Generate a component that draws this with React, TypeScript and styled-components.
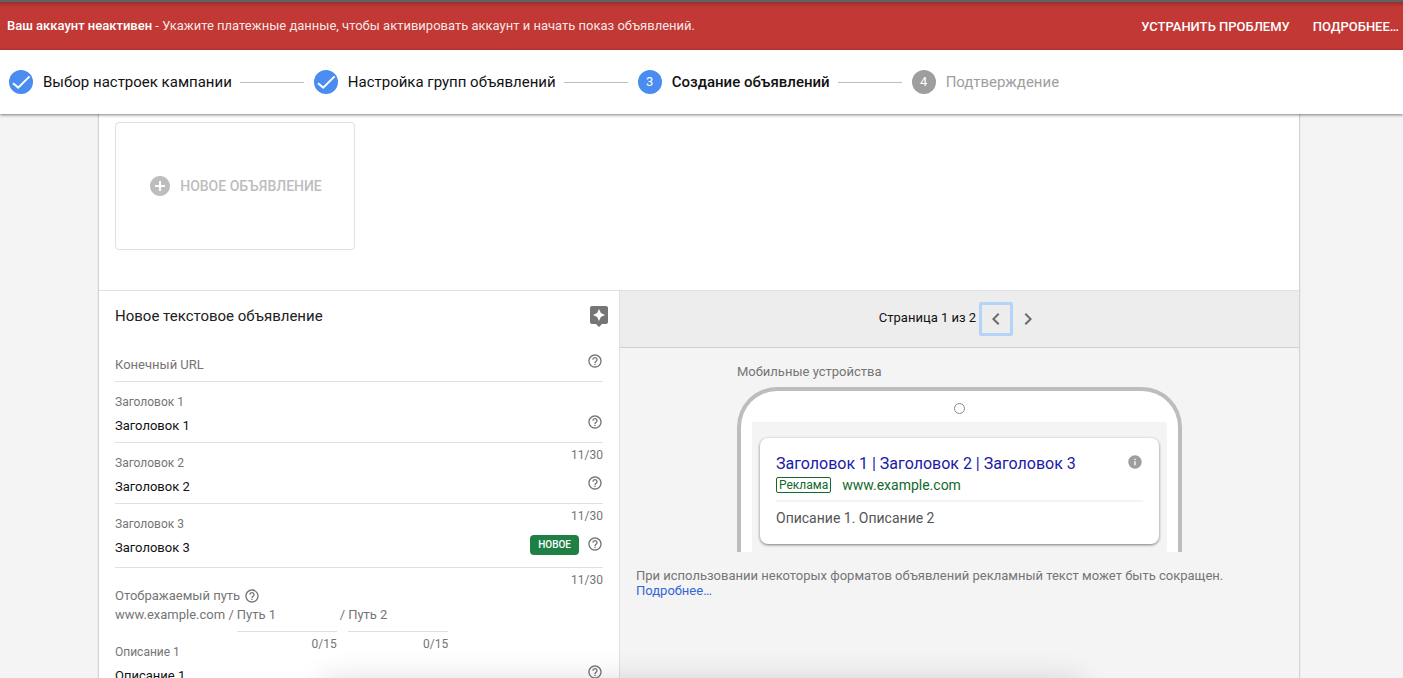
import React from "react";
import styled, { createGlobalStyle, css } from "styled-components";
import {
  MdAddCircle,
  MdAssistant,
  MdChevronLeft,
  MdChevronRight,
  MdHelpOutline,
  MdInfo,
} from "react-icons/md";

const GlobalStyle = createGlobalStyle`
  *, *::before, *::after { box-sizing: border-box; }
  body {
    margin: 0;
    background: #f4f4f4;
    font-family: Roboto, "Noto Sans", sans-serif;
    font-size: 13px;
    line-height: 16px;
    color: #212121;
  }
  button, input { font: inherit; color: inherit; }
`;

const Page = styled.div`
  display: flex;
  flex-direction: column;
  height: 100vh;
  overflow: hidden;
`;

/* Alert */

const Alert = styled.div`
  display: flex;
  align-items: center;
  justify-content: space-between;
  height: 50px;
  flex-shrink: 0;
  padding: 0 4px 0 7px;
  border-top: 2px solid #616161;
  background: linear-gradient(#92302d, #c13834 5px);
  color: #fff;
`;

const AlertText = styled.p`
  margin: 0;
  color: rgba(255, 255, 255, 0.9);

  b {
    font-weight: 500;
    color: #fff;
  }
`;

const AlertActions = styled.div`
  display: flex;
  gap: 23px;
  padding-top: 2px;
`;

const AlertButton = styled.button`
  padding: 0;
  border: 0;
  background: none;
  font-weight: 500;
  text-transform: uppercase;
  cursor: pointer;
`;

/* Stepper */

const Stepper = styled.ol`
  position: relative;
  z-index: 1;
  display: flex;
  align-items: center;
  gap: 8px;
  height: 64px;
  flex-shrink: 0;
  margin: 0;
  padding: 0 9px;
  list-style: none;
  background: #fff;
  box-shadow: 0 1px 3px rgba(0, 0, 0, 0.5);
`;

type StepState = "done" | "current" | "upcoming";

const Step = styled.li<{ $state: StepState }>`
  display: flex;
  align-items: center;
  gap: 10px;
  font-size: 15px;
  line-height: 20px;
  white-space: nowrap;
  font-weight: ${(p) => (p.$state === "current" ? 500 : 400)};
  color: ${(p) => (p.$state === "upcoming" ? "#9e9e9e" : "#111")};
`;

const StepMark = styled.span<{ $state: StepState }>`
  display: flex;
  align-items: center;
  justify-content: center;
  width: 24px;
  height: 24px;
  border-radius: 50%;
  background: ${(p) => (p.$state === "upcoming" ? "#9e9e9e" : "#4a8cf0")};
  color: #fff;
  font-size: 13px;
  font-weight: 400;
`;

const StepLine = styled.li`
  width: 64px;
  height: 1px;
  margin-right: 2px;
  background: #bdbdbd;
`;

/* Card */

const Main = styled.main`
  flex: 1;
  min-height: 0;
  padding: 0 104px 0 99px;
  overflow: hidden;
`;

const Card = styled.div`
  background: #fff;
  box-shadow: 0 0 2px rgba(0, 0, 0, 0.4);
`;

const AdList = styled.section`
  padding: 8px 16px 40px;
  border-bottom: 1px solid #e0e0e0;
`;

const NewAdButton = styled.button`
  display: flex;
  align-items: center;
  justify-content: center;
  gap: 8px;
  width: 240px;
  height: 128px;
  padding: 0;
  border: 1px solid #e0e0e0;
  border-radius: 4px;
  background: #fff;
  color: #bdbdbd;
  font-size: 14px;
  font-weight: 500;
  text-transform: uppercase;
  cursor: pointer;
`;

const Columns = styled.div`
  display: flex;
`;

const Editor = styled.form`
  width: 521px;
  flex-shrink: 0;
  padding: 0 16px 40px;
  border-right: 1px solid #e0e0e0;
`;

const EditorHeader = styled.header`
  display: flex;
  align-items: center;
  justify-content: space-between;
  height: 50px;
  margin: 0 -8px 9px 0;
  color: #757575;
`;

const EditorTitle = styled.h2`
  margin: 0;
  font-size: 15px;
  line-height: 20px;
  font-weight: 400;
  color: #212121;
`;

const IconButton = styled.button`
  display: flex;
  flex-shrink: 0;
  padding: 0;
  border: 0;
  background: none;
  color: #757575;
  cursor: pointer;
`;

/* Fields */

const FieldLabel = styled.label`
  display: block;
  margin-bottom: 1px;
  font-size: 12px;
  color: #757575;
`;

const FieldRow = styled.div`
  display: flex;
  align-items: flex-start;
  gap: 8px;
  min-height: 32px;
  border-bottom: 1px solid #e0e0e0;

  ${IconButton} {
    margin-top: 3px;
  }
`;

const inputReset = css`
  min-width: 0;
  padding: 0;
  border: 0;
  outline: 0;
  background: none;

  &::placeholder {
    color: #757575;
    opacity: 1;
  }
`;

const FieldInput = styled.input`
  ${inputReset}
  flex: 1;
  height: 28px;
  color: #111;
`;

const FieldFooter = styled.div`
  height: 12px;
  font-size: 12px;
  line-height: 24px;
  text-align: right;
  color: #757575;
`;

const NewBadge = styled.span`
  height: 20px;
  margin: 2px 0 12px;
  padding: 0 8px;
  border-radius: 4px;
  background: #1e8045;
  color: #fff;
  font-size: 10px;
  line-height: 20px;
  font-weight: 500;
`;

const PathLabel = styled.div`
  display: flex;
  align-items: center;
  gap: 4px;
  margin-top: 8px;
  color: #757575;
`;

const PathRow = styled.div`
  display: flex;
  gap: 3px;
  line-height: 22px;
  color: #757575;
`;

const PathField = styled.div`
  width: 100px;
`;

const PathInput = styled.input`
  ${inputReset}
  display: block;
  width: 100%;
  height: 28px;
  padding-bottom: 6px;
  border-bottom: 1px solid #e0e0e0;
`;

/* Preview */

const Preview = styled.section`
  flex: 1;
  min-width: 0;
  background: #f4f4f4;
`;

const Pager = styled.nav`
  display: flex;
  align-items: center;
  justify-content: center;
  height: 57px;
  padding-left: 4px;
  border-bottom: 1px solid #d0d0d0;
  background: #ededed;
  color: #111;
`;

const PagerText = styled.span`
  padding: 0 4px 2px 0;
`;

const PagerButton = styled.button<{ $active?: boolean }>`
  display: flex;
  align-items: center;
  justify-content: center;
  width: 32px;
  height: 32px;
  padding: 0;
  border: 0;
  border-radius: 1px;
  background: none;
  color: #6b6b6b;
  cursor: pointer;
  ${(p) => p.$active && "box-shadow: inset 0 0 0 2px #b3d4f7, 0 0 0 1px #b3d4f7;"}
`;

const Device = styled.figure`
  width: 445px;
  max-width: 100%;
  margin: 16px auto;
`;

const DeviceName = styled.figcaption`
  margin-bottom: 7px;
  color: #757575;
`;

const Phone = styled.div`
  display: flex;
  flex-direction: column;
  align-items: center;
  padding: 0 11px;
  border: 4px solid #bdbdbd;
  border-bottom: 0;
  border-radius: 40px 40px 0 0;
  background: #fff;
`;

const Camera = styled.span`
  width: 11px;
  height: 11px;
  margin: 12px 0 8px;
  border: 1px solid #8a8a8a;
  border-radius: 50%;
`;

const Screen = styled.div`
  align-self: stretch;
  padding: 16px 8px 8px;
  background: #f4f4f4;
`;

const AdCard = styled.article`
  height: 106px;
  padding: 16px;
  border-radius: 8px;
  background: #fff;
  box-shadow: 0 1px 3px rgba(0, 0, 0, 0.5);
`;

const AdHeading = styled.div`
  display: flex;
  justify-content: space-between;
  color: #9e9e9e;
`;

const AdTitle = styled.h3`
  margin: 0;
  font-size: 16px;
  line-height: 20px;
  font-weight: 400;
  color: #1a1aa8;
`;

const AdUrl = styled.div`
  display: flex;
  align-items: center;
  gap: 11px;
  height: 21px;
  font-size: 14px;
  color: #11692b;
`;

const AdTag = styled.span`
  padding: 0 2px;
  border: 1px solid #11692b;
  border-radius: 2px;
  font-size: 12px;
  line-height: 14px;
`;

const AdText = styled.p`
  margin: 5px 0 0;
  padding-top: 8px;
  border-top: 2px solid #f4f4f4;
  font-size: 14px;
  color: #545454;
`;

const Note = styled.p`
  margin: 0 16px;
  line-height: 15px;
  color: #757575;

  a {
    display: block;
    width: max-content;
    color: #3367d6;
    text-decoration: none;
  }
`;

/* Shadow cast by the sheet docked below the window's edge */
const SheetShadow = styled.div`
  position: fixed;
  z-index: 2;
  top: 100%;
  left: 23%;
  right: 23%;
  height: 40px;
  border-radius: 8px;
  box-shadow: 0 8px 32px 4px rgba(0, 0, 0, 0.16);
  pointer-events: none;
`;

const CheckMark = () => (
  <svg width="24" height="24" viewBox="0 0 24 24" fill="none" aria-hidden="true">
    <path d="M4 13.2 9.2 17.6 20.6 6.4" stroke="#fff" strokeWidth="2" />
  </svg>
);

const Help = () => (
  <IconButton type="button" aria-label="Справка">
    <MdHelpOutline size={16} />
  </IconButton>
);

interface FieldProps {
  id: string;
  label: string;
  value?: string;
  count?: string;
  isNew?: boolean;
}

const Field = ({ id, label, value, count, isNew }: FieldProps) => (
  <div>
    {value && <FieldLabel htmlFor={id}>{label}</FieldLabel>}
    <FieldRow>
      <FieldInput
        id={id}
        type="text"
        defaultValue={value}
        placeholder={value ? undefined : label}
        aria-label={value ? undefined : label}
      />
      {isNew && <NewBadge>НОВОЕ</NewBadge>}
      <Help />
    </FieldRow>
    <FieldFooter>{count}</FieldFooter>
  </div>
);

const steps: { title: string; state: StepState }[] = [
  { title: "Выбор настроек кампании", state: "done" },
  { title: "Настройка групп объявлений", state: "done" },
  { title: "Создание объявлений", state: "current" },
  { title: "Подтверждение", state: "upcoming" },
];

export default function App() {
  return (
    <Page>
      <GlobalStyle />
      <Alert role="alert">
        <AlertText>
          <b>Ваш аккаунт неактивен</b> - Укажите платежные данные, чтобы активировать аккаунт и
          начать показ объявлений.
        </AlertText>
        <AlertActions>
          <AlertButton type="button">Устранить проблему</AlertButton>
          <AlertButton type="button">Подробнее…</AlertButton>
        </AlertActions>
      </Alert>

      <Stepper>
        {steps.map((step, i) => (
          <React.Fragment key={step.title}>
            {i > 0 && <StepLine aria-hidden="true" />}
            <Step $state={step.state} aria-current={step.state === "current" ? "step" : undefined}>
              <StepMark $state={step.state}>
                {step.state === "done" ? <CheckMark /> : i + 1}
              </StepMark>
              {step.title}
            </Step>
          </React.Fragment>
        ))}
      </Stepper>

      <Main>
        <Card>
          <AdList>
            <NewAdButton type="button">
              <MdAddCircle size={24} />
              Новое объявление
            </NewAdButton>
          </AdList>

          <Columns>
            <Editor>
              <EditorHeader>
                <EditorTitle>Новое текстовое объявление</EditorTitle>
                <IconButton type="button" aria-label="Подсказки">
                  <MdAssistant size={24} />
                </IconButton>
              </EditorHeader>
              <Field id="url" label="Конечный URL" />
              <Field id="headline-1" label="Заголовок 1" value="Заголовок 1" count="11/30" />
              <Field id="headline-2" label="Заголовок 2" value="Заголовок 2" count="11/30" />
              <Field id="headline-3" label="Заголовок 3" value="Заголовок 3" count="11/30" isNew />
              <PathLabel>
                Отображаемый путь
                <Help />
              </PathLabel>
              <PathRow>
                <span>www.example.com /</span>
                <PathField>
                  <PathInput type="text" placeholder="Путь 1" aria-label="Путь 1" />
                  <FieldFooter>0/15</FieldFooter>
                </PathField>
                <span>/</span>
                <PathField>
                  <PathInput type="text" placeholder="Путь 2" aria-label="Путь 2" />
                  <FieldFooter>0/15</FieldFooter>
                </PathField>
              </PathRow>
              <Field id="description-1" label="Описание 1" value="Описание 1" />
            </Editor>

            <Preview>
              <Pager aria-label="Просмотр объявлений">
                <PagerText>Страница 1 из 2</PagerText>
                <PagerButton type="button" aria-label="Назад" $active>
                  <MdChevronLeft size={24} />
                </PagerButton>
                <PagerButton type="button" aria-label="Вперед">
                  <MdChevronRight size={24} />
                </PagerButton>
              </Pager>
              <Device>
                <DeviceName>Мобильные устройства</DeviceName>
                <Phone>
                  <Camera />
                  <Screen>
                    <AdCard>
                      <AdHeading>
                        <AdTitle>Заголовок 1 | Заголовок 2 | Заголовок 3</AdTitle>
                        <MdInfo size={16} />
                      </AdHeading>
                      <AdUrl>
                        <AdTag>Реклама</AdTag>
                        www.example.com
                      </AdUrl>
                      <AdText>Описание 1. Описание 2</AdText>
                    </AdCard>
                  </Screen>
                </Phone>
              </Device>
              <Note>
                При использовании некоторых форматов объявлений рекламный текст может быть сокращен.
                <a href="#more">Подробнее…</a>
              </Note>
            </Preview>
          </Columns>
        </Card>
      </Main>
      <SheetShadow />
    </Page>
  );
}
